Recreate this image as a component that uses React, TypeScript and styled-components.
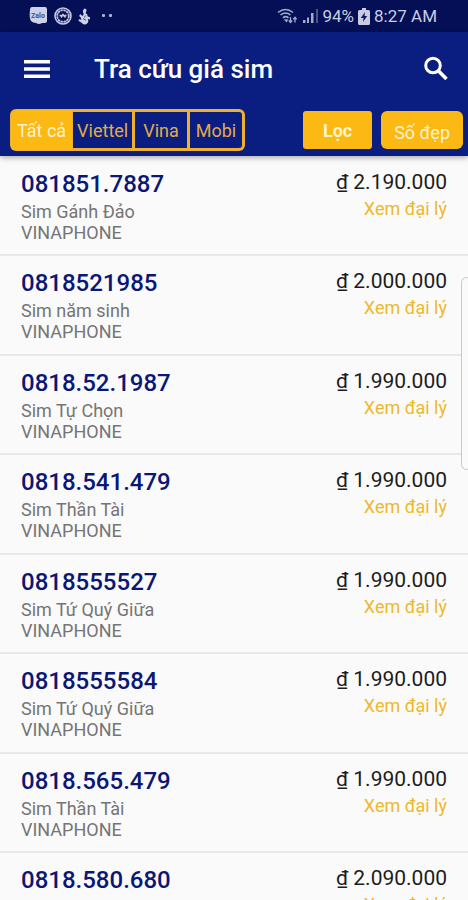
import React, { useState } from "react";
import styled, { createGlobalStyle } from "styled-components";

const GlobalStyle = createGlobalStyle`
  * { box-sizing: border-box; }
  body { margin: 0; background: #fafafa; font-family: Roboto, "Noto Sans", sans-serif; }
  button { font-family: inherit; cursor: pointer; }
`;

const Screen = styled.div`
  position: relative;
  display: flex;
  flex-direction: column;
  height: 100vh;
  overflow: hidden;
`;

const StatusBar = styled.div`
  display: flex;
  align-items: center;
  justify-content: space-between;
  flex: none;
  height: 32px;
  padding: 0 31px 0 29px;
  background: #050f56;
  color: #c9cde2;
  font-size: 17px;
  line-height: 32px;
`;

const StatusGroup = styled.div<{ $gap: number }>`
  display: flex;
  align-items: center;
  gap: ${(p) => p.$gap}px;
  white-space: nowrap;
`;

const Header = styled.header`
  position: relative;
  z-index: 1;
  flex: none;
  background: #0a1d80;
  box-shadow: 0 2px 5px rgba(0, 0, 0, 0.3);
`;

const TitleBar = styled.div`
  display: flex;
  align-items: center;
  height: 74px;
  padding: 0 19px 0 23px;
`;

const Title = styled.h1`
  flex: 1;
  margin: 0 0 0 43px;
  color: #fff;
  font-size: 26px;
  font-weight: 500;
  line-height: 32px;
`;

const IconButton = styled.button`
  display: flex;
  padding: 0;
  border: 0;
  background: none;
  color: #fff;
`;

const FilterBar = styled.div`
  display: flex;
  align-items: center;
  height: 50px;
  padding: 0 5px 2px 10px;
`;

const Segments = styled.div`
  display: flex;
  gap: 3px;
  height: 42px;
  margin-right: auto;
  padding: 3px;
  border-radius: 6px;
  background: #f0b02e;
`;

const Segment = styled.button<{ $active: boolean }>`
  padding: 0 4px;
  border: 0;
  background: ${(p) => (p.$active ? "#fdb913" : "#0a1d80")};
  color: ${(p) => (p.$active ? "#fff3d0" : "#e0ac48")};
  font-size: 18px;
  &:nth-child(1) { margin: -2px; border-radius: 5px 0 0 5px; padding: 0 6px; }
  &:nth-child(3) { padding: 0 8px; }
  &:last-child { padding: 0 6px; border-radius: 0 3px 3px 0; }
`;

const ActionButton = styled.button<{ $bold?: boolean }>`
  height: 38px;
  margin-left: 9px;
  padding: ${(p) => (p.$bold ? "0 20px" : "4px 13px 0")};
  border: 0;
  border-radius: ${(p) => (p.$bold ? 3 : 6)}px;
  background: #fdb913;
  color: #fff3d0;
  font-size: 18px;
  font-weight: ${(p) => (p.$bold ? 700 : 400)};
`;

const SimList = styled.ul`
  flex: 1;
  min-height: 0;
  margin: 0;
  padding: 1px 0 0;
  overflow-y: auto;
  scrollbar-width: none;
  list-style: none;
`;

const SimRow = styled.li`
  display: flex;
  justify-content: space-between;
  height: 99px;
  padding: 13px 21px 0;
  border-bottom: 2px solid #e8e8e8;
  &:nth-child(even) { height: 100px; }
`;

const Details = styled.div`
  color: #757575;
  font-size: 18px;
  line-height: 21px;
`;

const Phone = styled.div`
  margin-bottom: 3px;
  color: #0b1776;
  font-size: 24px;
  font-weight: 500;
  line-height: 28px;
`;

const Offer = styled.div`
  display: flex;
  flex-direction: column;
  align-items: flex-end;
`;

const Price = styled.div`
  color: #1c1c1c;
  font-size: 21px;
  line-height: 25px;
`;

const DealerLink = styled.a`
  margin-top: 3px;
  color: #edb92c;
  font-size: 18px;
  line-height: 21px;
  text-decoration: none;
`;

const EdgeHandle = styled.div`
  position: absolute;
  z-index: 2;
  top: 277px;
  right: -4px;
  width: 11px;
  height: 193px;
  border: 1px solid #c8c8c8;
  border-radius: 7px;
  background: #fafafa;
`;

const sims = [
  ["081851.7887", "Sim Gánh Đảo", "2.190.000"],
  ["0818521985", "Sim năm sinh", "2.000.000"],
  ["0818.52.1987", "Sim Tự Chọn", "1.990.000"],
  ["0818.541.479", "Sim Thần Tài", "1.990.000"],
  ["0818555527", "Sim Tứ Quý Giữa", "1.990.000"],
  ["0818555584", "Sim Tứ Quý Giữa", "1.990.000"],
  ["0818.565.479", "Sim Thần Tài", "1.990.000"],
  ["0818.580.680", "Sim Tự Chọn", "2.090.000"],
];

const networks = ["Tất cả", "Viettel", "Vina", "Mobi"];

const ChatIcon = () => (
  <svg width="19" height="20" viewBox="0 0 19 20">
    <path d="M3 1H16Q18 1 18 3V15Q18 17 16 17L13 17Q10 19 7 17Q4 17 2 15Q0 12 1 4Q1 1 3 1Z" fill="#ced2e6" />
    <text x="9" y="12" textAnchor="middle" fontSize="7" fontWeight="700" fill="#454c84">Zalo</text>
  </svg>
);

const SealIcon = () => (
  <svg width="18" height="18" viewBox="0 0 18 18" fill="none" stroke="#c3c8df">
    <circle cx="9" cy="9" r="8" strokeWidth="1.6" />
    <circle cx="9" cy="9" r="5.8" strokeWidth="1.8" strokeDasharray="2.4 .6" />
    <path d="M5.5 8.5h7M7 10.5l2-3 2.5 3" strokeWidth="1.5" />
  </svg>
);

const FigureIcon = () => (
  <svg width="13" height="17" viewBox="0 0 13 17" fill="#ced2e6">
    <path d="M6.5 0.5Q9 1 8.4 3L7.6 5.3Q9.8 6 9.6 8.2L12.2 9.6 11.8 11.4 9.8 11Q11.6 15 7.4 16.4 4.8 16.8 3.6 14.8L.4 12.8 1 11.2 3.4 11.8 2.8 9.8 1.2 8 2.2 6 4.4 8 5.6 6.6 4.8 2.6Z" />
    <path d="M5 10.5l3 1.8M7.5 7.5l-1 2" stroke="#252e6c" strokeWidth=".8" />
  </svg>
);

const DotsIcon = () => (
  <svg width="16" height="4" viewBox="0 0 16 4" fill="#a9afcf">
    <rect x="5" y="0" width="3" height="3" rx="1" />
    <rect x="12" y="0" width="3" height="3" rx="1" />
  </svg>
);

const WifiIcon = () => (
  <svg width="21" height="17" viewBox="0 0 21 17" fill="none" stroke="#a4abca" strokeWidth="1.6">
    <path d="M1 4.5Q8.5 -1.5 16 4.5M3.5 7Q8.5 3 13.5 7M6 9.8Q8.5 7.5 11.5 9.8" />
    <path d="M6.8 11.2L9.5 14.5 11.5 11.5Z" fill="#a4abca" stroke="none" />
    <path d="M13.5 9v5M11.8 12.5l1.7 2 1.7-2M18 14.5v-5M16.3 11.3l1.7-2 1.7 2" strokeWidth="1.3" />
  </svg>
);

const SignalIcon = () => (
  <svg width="17" height="16" viewBox="0 0 17 16" fill="#a4abca">
    <path d="M1 12h2.5v3H1zM5 9.5h2v5.5H5zM9 5h2.5v10H9z" />
    <path d="M14 1h2v14h-2z" fill="#4b5488" />
  </svg>
);

const BatteryIcon = () => (
  <svg width="12" height="17" viewBox="0 0 12 17">
    <path d="M4 0h4v2h2.5q1.5 0 1.5 1.5v12q0 1.5-1.5 1.5h-9Q0 17 0 15.5v-12Q0 2 1.5 2H4z" fill="#c9cde2" />
    <path d="M7 4L2.8 10h2.7L5 14l4.2-6H6.5z" fill="#111b5c" />
  </svg>
);

export default function App() {
  const [network, setNetwork] = useState("Tất cả");
  return (
    <>
      <GlobalStyle />
      <Screen>
        <StatusBar>
          <StatusGroup $gap={6}>
            <ChatIcon />
            <SealIcon />
            <FigureIcon />
            <DotsIcon />
          </StatusGroup>
          <StatusGroup $gap={4}>
            <WifiIcon />
            <SignalIcon />
            <span>94%</span>
            <BatteryIcon />
            <span>8:27 AM</span>
          </StatusGroup>
        </StatusBar>
        <Header>
          <TitleBar>
            <IconButton aria-label="Menu">
              <svg width="28" height="20" viewBox="0 0 28 20" fill="currentColor">
                <path d="M1 1h26v3.5H1zM1 8.200h26v3.5H1zM1 15.4h26v3.5H1z" />
              </svg>
            </IconButton>
            <Title>Tra cứu giá sim</Title>
            <IconButton aria-label="Tìm kiếm">
              <svg width="26" height="26" viewBox="0 0 26 26" fill="none" stroke="currentColor" strokeWidth="3">
                <circle cx="10" cy="9.5" r="7.3" />
                <path d="M15.3 14.8L23.500 23" strokeWidth="3.6" />
              </svg>
            </IconButton>
          </TitleBar>
          <FilterBar>
            <Segments role="group" aria-label="Nhà mạng">
              {networks.map((n) => (
                <Segment key={n} $active={n === network} aria-pressed={n === network} onClick={() => setNetwork(n)}>
                  {n}
                </Segment>
              ))}
            </Segments>
            <ActionButton $bold>Lọc</ActionButton>
            <ActionButton>Số đẹp</ActionButton>
          </FilterBar>
        </Header>
        <SimList>
          {sims.map(([phone, kind, price]) => (
            <SimRow key={phone}>
              <Details>
                <Phone>{phone}</Phone>
                <div>{kind}</div>
                <div>VINAPHONE</div>
              </Details>
              <Offer>
                <Price>₫ {price}</Price>
                <DealerLink href="#">Xem đại lý</DealerLink>
              </Offer>
            </SimRow>
          ))}
        </SimList>
        <EdgeHandle />
      </Screen>
    </>
  );
}
